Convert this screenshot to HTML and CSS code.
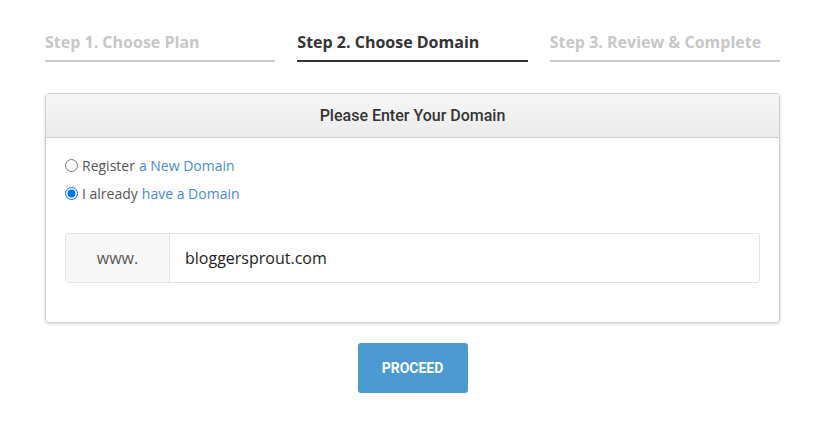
FILE: index.html
```html
<!DOCTYPE html>
<html>
<head>
<meta charset="utf-8">
<link rel="stylesheet" href="styles.css">
</head>
<body>
<div class="wrap">
  <div class="steps">
    <div class="step">Step 1. Choose Plan</div>
    <div class="step active">Step 2. Choose Domain</div>
    <div class="step">Step 3. Review &amp; Complete</div>
  </div>
  <div class="panel">
    <div class="panel-head">Please Enter Your Domain</div>
    <div class="panel-body">
      <label class="opt"><input type="radio" name="d"> Register <a class="lnk">a New Domain</a></label>
      <label class="opt"><input type="radio" name="d" checked> I already <a class="lnk">have a Domain</a></label>
      <div class="group">
        <span class="addon">www.</span>
        <span class="field">bloggersprout.com</span>
      </div>
    </div>
  </div>
  <div class="actions"><button class="btn">PROCEED</button></div>
</div>
</body>
</html>
```
FILE: styles.css
```css
html, body { margin: 0; padding: 0; background: #fff; }
body { font-family: "Open Sans", sans-serif; }
.wrap { width: 735px; margin-left: 45px; padding-top: 31px; }
.steps { display: grid; grid-template-columns: 1fr 1fr 1fr; column-gap: 22px; }
.step {
  font-weight: 700; font-size: 16px; line-height: 22px; color: #c6c6c6;
  padding-bottom: 7px; border-bottom: 2px solid #cccccc;
}
.step.active { color: #333333; border-bottom-color: #333333; }
.panel {
  margin-top: 31px; border: 1px solid #cfcfcf; border-radius: 4px;
  box-shadow: 0 1px 3px rgba(0,0,0,0.18); overflow: hidden;
}
.panel-head {
  height: 43px; line-height: 43px; text-align: center;
  font-family: Roboto, sans-serif; font-weight: 500; font-size: 16px; color: #333;
  background: linear-gradient(#f6f6f6, #ebebeb); border-bottom: 1px solid #cfcfcf;
}
.panel-body { padding: 13px 19px 39px 19px; }
.opt { display: flex; align-items: center; font-size: 14px; color: #555; height: 28px; }
.opt input { margin: 0 4px 0 0; width: 13px; height: 13px; }
.lnk { color: #4a8ad4; margin-left: 4px; }
.group {
  display: flex; margin-top: 26px; height: 48px; border: 1px solid #e3e3e3; border-radius: 3px;
}
.addon {
  width: 103px; background: #f7f7f7; border-right: 1px solid #e3e3e3;
  display: flex; align-items: center; justify-content: center; font-size: 16px; color: #555;
}
.field { display: flex; align-items: center; padding-left: 15px; font-size: 16px; color: #222; }
.actions { display: flex; justify-content: center; margin-top: 20px; }
.btn {
  width: 110px; height: 50px; border: none; border-radius: 3px; background: #4b99d1;
  color: #fff; font-family: Roboto, sans-serif; font-weight: 700; font-size: 14px;
}
```
